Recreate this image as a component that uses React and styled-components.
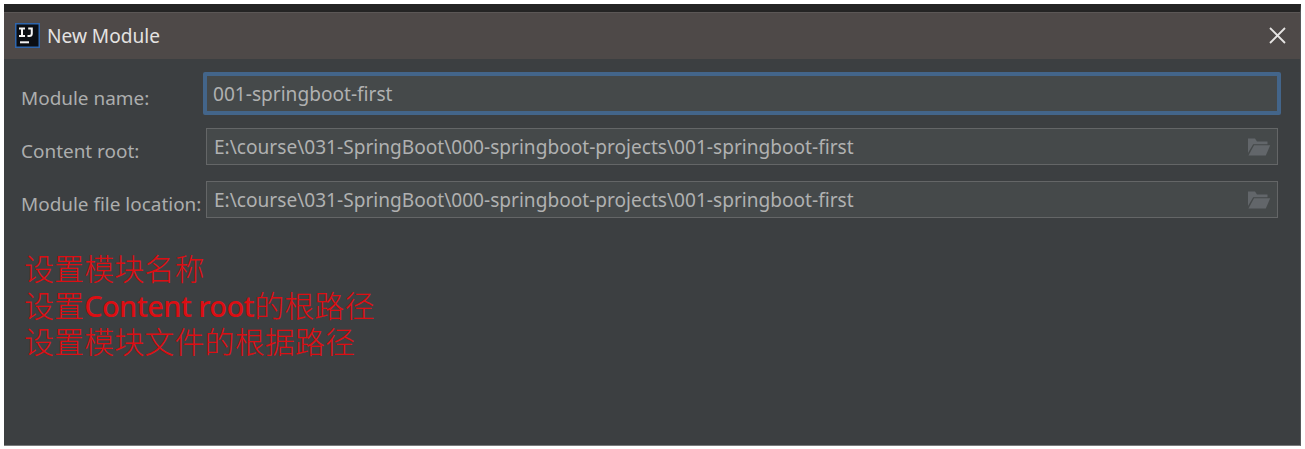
import React from "react";
import styled, { createGlobalStyle } from "styled-components";

const GlobalStyle = createGlobalStyle`
  * { box-sizing: border-box; }
  body { margin: 0; background: #fff; }
`;

const Page = styled.main`
  width: 1305px;
  height: 449px;
  padding: 4px 4px 3px;
  overflow: hidden;
  font-family: "Noto Sans", "Noto Sans CJK SC", sans-serif;
`;

const Dialog = styled.section`
  height: 442px;
  display: flex;
  flex-direction: column;
  background: #3c3f41;
  border-top: 8px solid #242424;
  border-right: 1px solid #56585a;
  border-bottom: 1px solid #797b7c;
`;

const TitleBar = styled.header`
  height: 47px;
  flex: none;
  display: flex;
  align-items: center;
  padding: 0 14px 2px 11px;
  background: #4e4948;
  border-top: 1px solid #5b5756;
`;

const Title = styled.h1`
  flex: 1;
  margin: 2px 0 0 7px;
  color: #e4e2e1;
  font-size: 19.1px;
  font-weight: 400;
  line-height: 26px;
`;

const Form = styled.div`
  display: flex;
  flex-direction: column;
  gap: 10px;
  padding: 13px 19px 0 17px;
`;

const Row = styled.div`
  display: flex;
  height: 43px;
  align-items: center;
`;

const Label = styled.label`
  width: 182px;
  flex: none;
  padding-top: 8px;
  color: #adaeae;
  font-size: 18.95px;
  line-height: 26px;
  white-space: nowrap;
`;

const Field = styled.div`
  flex: 1;
  display: flex;
  align-items: center;
  justify-content: space-between;
  height: ${(p) => (p.$focused ? "43px" : "37px")};
  margin: ${(p) => (p.$focused ? "0" : "0 3px")};
  padding: ${(p) => (p.$focused ? "0 6px" : "0 6px 0 7px")};
  background: #45494a;
  border: ${(p) => (p.$focused ? "4px solid #43658a" : "1px solid #646667")};
  border-radius: ${(p) => (p.$focused ? "2px" : "0")};
`;

const Value = styled.span`
  color: #b0b1b1;
  font-size: 19.1px;
  line-height: 26px;
  white-space: nowrap;
`;

const Notes = styled.div`
  padding: 30px 0 0 20px;
  color: #dc0e13;
  font-size: 30.1px;
  font-weight: 300;
  line-height: 36.5px;
  white-space: nowrap;
`;

const Note = styled.p`
  margin: 0;
`;

const Latin = styled.span`
  font-weight: 500;
  font-size: 29px;
  letter-spacing: -0.6px;
`;

const IdeaIcon = () => (
  <svg width="25" height="25" viewBox="0 0 25 25">
    <rect x="0.75" y="0.75" width="23.5" height="23.5" fill="#0b0e13" stroke="#2f66ad" strokeWidth="1.5" />
    <g fill="none" stroke="#f2f2f2" strokeWidth="2">
      <path d="M4 5.5h6M7 5.5v7.5M4 13h6M13.2 5.5h3.6v5q0 2.5-2.5 2.5h-1.8" />
      <path d="M5 19.3h9" />
    </g>
  </svg>
);

const CloseIcon = () => (
  <svg width="17" height="17" viewBox="0 0 17 17">
    <path d="M1 1l15 15M16 1L1 16" stroke="#e6e4e3" strokeWidth="1.8" fill="none" />
  </svg>
);

const FolderIcon = () => (
  <svg width="24" height="18" viewBox="0 0 24 18">
    <path d="M1 0.5h7l2 3h10.5v2.8H6.2L1 15z" fill="#62666a" />
    <path d="M7 7.3h16.2L18.8 17.5H1.5z" fill="#62666a" />
  </svg>
);

const PATH = "E:\\course\\031-SpringBoot\\000-springboot-projects\\001-springboot-first";

export default function App() {
  return (
    <Page>
      <GlobalStyle />
      <Dialog>
        <TitleBar>
          <IdeaIcon />
          <Title>New Module</Title>
          <CloseIcon />
        </TitleBar>
        <Form>
          <Row>
            <Label>Module name:</Label>
            <Field $focused>
              <Value>001-springboot-first</Value>
            </Field>
          </Row>
          <Row>
            <Label>Content root:</Label>
            <Field>
              <Value>{PATH}</Value>
              <FolderIcon />
            </Field>
          </Row>
          <Row>
            <Label>Module file location:</Label>
            <Field>
              <Value>{PATH}</Value>
              <FolderIcon />
            </Field>
          </Row>
        </Form>
        <Notes>
          <Note>设置模块名称</Note>
          <Note>
            设置<Latin>Content root</Latin>的根路径
          </Note>
          <Note>设置模块文件的根据路径</Note>
        </Notes>
      </Dialog>
    </Page>
  );
}
